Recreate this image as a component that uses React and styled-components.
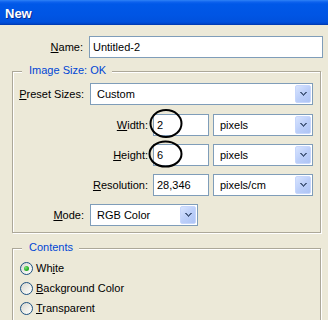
import React from "react";
import styled, { createGlobalStyle } from "styled-components";

const GlobalStyle = createGlobalStyle`
  html, body { margin: 0; padding: 0; background: #ece9d8; }
  body { font-family: "Liberation Sans", Arial, sans-serif; font-size: 11px; color: #000; }
`;

const Dialog = styled.div`
  position: relative;
  width: 328px;
  height: 320px;
  overflow: hidden;
  background: #ece9d8;
`;

const TitleBar = styled.div`
  height: 25px;
  box-sizing: border-box;
  padding: 2px 0 0 5px;
  display: flex;
  align-items: center;
  background: linear-gradient(
    to bottom,
    #2f82f6 0,
    #0e62ee 2px,
    #0058e8 4px,
    #0055e4 60%,
    #0051dd 88%,
    #0044c6 96%,
    #0035a6 100%
  );
  color: #fff;
  font: bold 13px "Liberation Sans", Arial, sans-serif;
  text-shadow: 1px 1px 0 #0b2a8c;
`;

const Body = styled.div`
  padding: 11px 0 0 12px;
`;

const Row = styled.div`
  display: flex;
  align-items: center;
  height: 22px;
  margin-bottom: ${(p) => p.$mb ?? 0}px;
`;

const Label = styled.label`
  flex: none;
  width: ${(p) => p.$w}px;
  margin-right: ${(p) => p.$gap ?? 6}px;
  text-align: right;
  white-space: nowrap;
`;

const U = styled.span`
  text-decoration: underline;
`;

const TextInput = styled.input`
  flex: none;
  box-sizing: border-box;
  width: ${(p) => p.$w}px;
  height: 22px;
  margin: 0 ${(p) => p.$mr ?? 0}px 0 0;
  border: 1px solid #7f9db9;
  background: #fff;
  padding: 0 0 0 3px;
  font: 11px "Liberation Sans", Arial, sans-serif;
  color: #000;
  outline: none;
`;

const Combo = styled.div`
  flex: none;
  box-sizing: border-box;
  width: ${(p) => p.$w}px;
  height: 22px;
  border: 1px solid #7f9db9;
  background: #fff;
  padding: 1px;
  display: flex;
  align-items: stretch;
`;

const ComboText = styled.span`
  flex: 1;
  display: flex;
  align-items: center;
  padding-left: 5px;
  white-space: nowrap;
`;

const ComboButton = styled.span`
  flex: none;
  width: 16px;
  box-sizing: border-box;
  border: 1px solid #c6d6fc;
  border-radius: 2px;
  background: linear-gradient(135deg, #d8e4fe 0%, #bccff9 50%, #aec4f5 100%);
  display: flex;
  align-items: center;
  justify-content: center;
`;

const Arrow = () => (
  <svg width="7" height="4" viewBox="0 0 7 4" shapeRendering="crispEdges">
    <g fill="#4d6185">
      <rect x="0" y="0" width="2" height="1" />
      <rect x="5" y="0" width="2" height="1" />
      <rect x="1" y="1" width="2" height="1" />
      <rect x="4" y="1" width="2" height="1" />
      <rect x="2" y="2" width="3" height="1" />
      <rect x="3" y="3" width="1" height="1" />
    </g>
  </svg>
);

const Select = ({ w, children }) => (
  <Combo $w={w}>
    <ComboText>{children}</ComboText>
    <ComboButton>
      <Arrow />
    </ComboButton>
  </Combo>
);

const Group = styled.div`
  position: relative;
  box-sizing: border-box;
  width: 309px;
  height: ${(p) => p.$h}px;
  margin-top: ${(p) => p.$mt}px;
  padding: ${(p) => p.$pad};
  border: 1px solid #aca899;
  box-shadow: 1px 1px 0 #fff, inset 1px 1px 0 #fff;
`;

const Legend = styled.span`
  position: absolute;
  left: 9px;
  top: -8px;
  padding: 0 6px 0 7px;
  line-height: 13px;
  background: #ece9d8;
  color: #0046d5;
  white-space: nowrap;
`;

const RadioRow = styled.label`
  display: flex;
  align-items: center;
  height: 20px;
`;

const RadioCircle = styled.span`
  flex: none;
  width: 13px;
  height: 13px;
  box-sizing: border-box;
  margin-right: 3px;
  border: 1px solid #1c5180;
  border-radius: 50%;
  background: linear-gradient(135deg, #d6d6cf 0%, #f1f1ec 60%, #ffffff 100%);
  display: flex;
  align-items: center;
  justify-content: center;
`;

const Dot = styled.span`
  width: 5px;
  height: 5px;
  border-radius: 50%;
  background: radial-gradient(circle at 35% 35%, #7ce27a 0%, #29b127 55%, #179d14 100%);
`;

const Radio = ({ checked, children }) => (
  <RadioRow>
    <RadioCircle>{checked && <Dot />}</RadioCircle>
    <span>{children}</span>
  </RadioRow>
);

const Annotations = styled.svg`
  position: absolute;
  left: 0;
  top: 0;
  pointer-events: none;
`;

export default function App() {
  return (
    <>
      <GlobalStyle />
      <Dialog>
        <TitleBar>New</TitleBar>
        <Body>
          <Row>
            <Label $w={71}>
              <U>N</U>ame:
            </Label>
            <TextInput $w={234} readOnly value="Untitled-2" />
          </Row>

          <Group $mt={13} $h={162} $pad="11px 0 6px 0">
            <Legend>Image Size: OK</Legend>
            <Row $mb={9}>
              <Label $w={71}>
                <U>P</U>reset Sizes:
              </Label>
              <Select w={223}>Custom</Select>
            </Row>
            <Row $mb={8}>
              <Label $w={135} $gap={5}>
                <U>W</U>idth:
              </Label>
              <TextInput $w={56} $mr={4} readOnly value="2" />
              <Select w={100}>pixels</Select>
            </Row>
            <Row $mb={8}>
              <Label $w={135} $gap={5}>
                <U>H</U>eight:
              </Label>
              <TextInput $w={56} $mr={4} readOnly value="6" />
              <Select w={100}>pixels</Select>
            </Row>
            <Row $mb={8}>
              <Label $w={135} $gap={5}>
                <U>R</U>esolution:
              </Label>
              <TextInput $w={56} $mr={4} readOnly value="28,346" />
              <Select w={100}>pixels/cm</Select>
            </Row>
            <Row>
              <Label $w={71}>
                <U>M</U>ode:
              </Label>
              <Select w={108}>RGB Color</Select>
            </Row>
          </Group>

          <Group $mt={15} $h={110} $pad="9px 0 0 7px">
            <Legend>Contents</Legend>
            <Radio checked>
              Wh<U>i</U>te
            </Radio>
            <Radio>
              <U>B</U>ackground Color
            </Radio>
            <Radio>
              <U>T</U>ransparent
            </Radio>
          </Group>
        </Body>

        <Annotations width="328" height="320" viewBox="0 0 328 320">
          <ellipse cx="166" cy="123.5" rx="15.5" ry="13.5" fill="none" stroke="#000" strokeWidth="2" />
          <ellipse cx="165.5" cy="154" rx="16" ry="12.5" fill="none" stroke="#000" strokeWidth="2" />
        </Annotations>
      </Dialog>
    </>
  );
}
